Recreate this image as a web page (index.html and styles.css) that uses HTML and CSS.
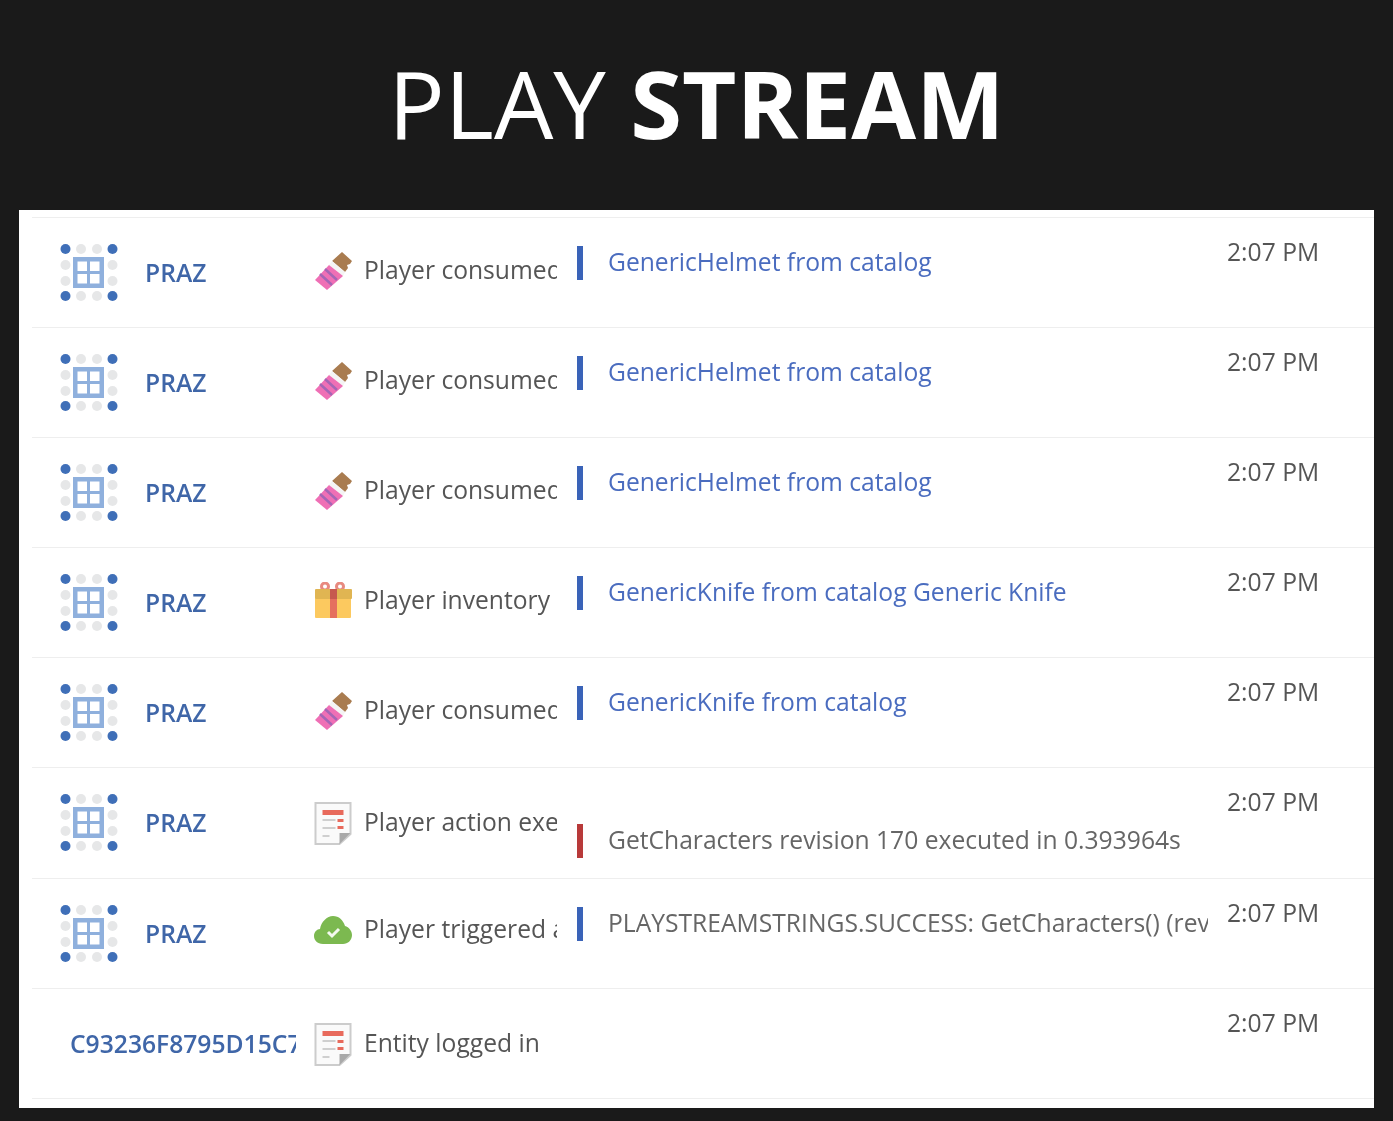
FILE: index.html
```html
<!DOCTYPE html>
<html lang="en">
<head>
    <meta charset="UTF-8">
    <meta name="viewport" content="width=device-width, initial-scale=1.0">
    <title>Play Stream</title>
    <link rel="stylesheet" href="styles.css">
</head>
<body>
    <svg class="sprites" width="0" height="0" aria-hidden="true">
        <symbol id="avatar" viewBox="0 0 58 58">
            <g fill="#e6e7e8">
                <circle cx="21" cy="5" r="5"/><circle cx="37" cy="5" r="5"/>
                <circle cx="21" cy="52" r="5"/><circle cx="37" cy="52" r="5"/>
                <circle cx="5.500" cy="21" r="5"/><circle cx="5.500" cy="37" r="5"/>
                <circle cx="52.500" cy="21" r="5"/><circle cx="52.500" cy="37" r="5"/>
            </g>
            <g fill="#3f6fb8">
                <circle cx="5.500" cy="5" r="5"/><circle cx="52.500" cy="5" r="5"/>
                <circle cx="5.500" cy="52" r="5"/><circle cx="52.500" cy="52" r="5"/>
            </g>
            <path fill="#8fb0dd" fill-rule="evenodd" d="M13 13h31v31H13zM17.500 17.500V27H27v-9.500zM30 17.500V27h9.500v-9.500zM17.500 30v9.500H27V30zM30 30v9.500h9.500V30z"/>
        </symbol>
        <symbol id="candy" viewBox="0 0 38 38">
            <path fill="#a97c50" d="M18 9 28 0l10 9-2 3-3 1 1 3-3 4z"/>
            <path fill="#f4f4f4" d="M15 13l3-4 13 11-2 4z"/>
            <path fill="#ef6fb5" d="M1 28 15 13 29 24 13 38z"/>
            <path fill="none" stroke="#a565b5" stroke-width="2.500" d="M6 22l12 11M11 17l12 11"/>
        </symbol>
        <symbol id="gift" viewBox="0 0 38 38">
            <circle cx="11" cy="4.500" r="3.500" fill="none" stroke="#e88a80" stroke-width="3"/>
            <circle cx="26" cy="4.500" r="3.500" fill="none" stroke="#e88a80" stroke-width="3"/>
            <rect x="1" y="16" width="36" height="20" rx="1" fill="#fcc95f"/>
            <rect x="1" y="7" width="37" height="10" rx="1" fill="#e0b552"/>
            <rect x="16" y="7" width="7" height="29" fill="#e5705f"/>
            <rect x="16" y="7" width="7" height="10" fill="#c6594f"/>
        </symbol>
        <symbol id="doc" viewBox="0 0 37 43">
            <path fill="#fafafa" stroke="#cccccc" stroke-width="2" d="M1 1h35v31L25 42H1z"/>
            <path fill="#a9a9a9" d="M36 31 25 42V31z"/>
            <rect x="8" y="8" width="21" height="5" fill="#e86a5c"/>
            <path fill="#cfcfcf" d="M8 17h13v2H8zM8 25h13v2H8zM8 33h7v2H8z"/>
            <path fill="#e86a5c" d="M23 17h6v3h-6zM23 24h6v3h-6z"/>
        </symbol>
        <symbol id="cloud" viewBox="0 0 38 28">
            <path fill="#7cb950" d="M9 28C3 28 0 24 0 20c0-4 3-7 6-7 1-7 7-13 13-13 6 0 10 4 12 10 4 1 7 5 7 9 0 5-4 9-9 9z"/>
            <path fill="none" stroke="#f4f9ef" stroke-width="3" d="m14 16 4 4 7-7"/>
        </symbol>
    </svg>

    <h1 class="title">PLAY <strong>STREAM</strong></h1>

    <div class="panel">
        <div class="row">
            <svg class="avatar"><use href="#avatar"/></svg>
            <div class="name">PRAZ</div>
            <svg class="icon icon-candy"><use href="#candy"/></svg>
            <div class="event">Player consumed item</div>
            <div class="detail"><a class="link">GenericHelmet from catalog</a></div>
            <div class="time">2:07 PM</div>
        </div>
        <div class="row">
            <svg class="avatar"><use href="#avatar"/></svg>
            <div class="name">PRAZ</div>
            <svg class="icon icon-candy"><use href="#candy"/></svg>
            <div class="event">Player consumed item</div>
            <div class="detail"><a class="link">GenericHelmet from catalog</a></div>
            <div class="time">2:07 PM</div>
        </div>
        <div class="row">
            <svg class="avatar"><use href="#avatar"/></svg>
            <div class="name">PRAZ</div>
            <svg class="icon icon-candy"><use href="#candy"/></svg>
            <div class="event">Player consumed item</div>
            <div class="detail"><a class="link">GenericHelmet from catalog</a></div>
            <div class="time">2:07 PM</div>
        </div>
        <div class="row">
            <svg class="avatar"><use href="#avatar"/></svg>
            <div class="name">PRAZ</div>
            <svg class="icon icon-gift"><use href="#gift"/></svg>
            <div class="event">Player inventory item added</div>
            <div class="detail"><a class="link">GenericKnife from catalog Generic Knife</a></div>
            <div class="time">2:07 PM</div>
        </div>
        <div class="row">
            <svg class="avatar"><use href="#avatar"/></svg>
            <div class="name">PRAZ</div>
            <svg class="icon icon-candy"><use href="#candy"/></svg>
            <div class="event">Player consumed item</div>
            <div class="detail"><a class="link">GenericKnife from catalog</a></div>
            <div class="time">2:07 PM</div>
        </div>
        <div class="row">
            <svg class="avatar"><use href="#avatar"/></svg>
            <div class="name">PRAZ</div>
            <svg class="icon icon-doc"><use href="#doc"/></svg>
            <div class="event event-low">Player action executed</div>
            <div class="detail detail-low">GetCharacters revision 170 executed in 0.393964s</div>
            <div class="time">2:07 PM</div>
        </div>
        <div class="row">
            <svg class="avatar"><use href="#avatar"/></svg>
            <div class="name">PRAZ</div>
            <svg class="icon icon-cloud"><use href="#cloud"/></svg>
            <div class="event event-trigger">Player triggered action</div>
            <div class="detail">PLAYSTREAMSTRINGS.SUCCESS: GetCharacters() (revision 170)</div>
            <div class="time">2:07 PM</div>
        </div>
        <div class="row">
            <div class="name name-id">C93236F8795D15C7</div>
            <svg class="icon icon-doc"><use href="#doc"/></svg>
            <div class="event event-low">Entity logged in</div>
            <div class="time">2:07 PM</div>
        </div>
    </div>
</body>
</html>
```

FILE: styles.css
```css
body {
    margin: 0;
    height: 1121px;
    overflow: hidden;
    background-color: #1a1a1a;
    font-family: "Open Sans", sans-serif;
}

.sprites {
    position: absolute;
}

.title {
    margin: 0;
    height: 210px;
    line-height: 206px;
    text-align: center;
    color: #fff;
    font-size: 94px;
    font-weight: 400;
}

.title strong {
    font-weight: 700;
}

.panel {
    margin: 0 19px;
    height: 898px;
    padding: 6.8px 0 0 13px;
    box-sizing: border-box;
    background-color: #fff;
    filter: blur(0.45px);
}

.row {
    display: grid;
    grid-template-columns: 28px 58px 27px 151px 18px 38px 12px 193px 20px 631px 1fr;
    height: 110.13px;
    box-sizing: border-box;
    border-top: 1px solid #eeeeee;
    font-size: 24.65px;
    color: #555;
}

.row:last-child {
    height: 111px;
    border-bottom: 1px solid #eeeeee;
}

.avatar {
    grid-column: 2;
    width: 58px;
    height: 58px;
    margin-top: 26px;
}

.name {
    grid-column: 4;
    margin-top: 37px;
    line-height: 36px;
    color: #3f66a8;
    font-weight: 600;
    white-space: nowrap;
    overflow: hidden;
}

.name-id {
    grid-column: 1 / 5;
    margin-left: 38px;
}

.icon {
    grid-column: 6;
    width: 38px;
}

.icon-candy,
.icon-gift {
    height: 38px;
    margin-top: 34px;
}

.icon-doc {
    height: 43px;
    margin-top: 34px;
}

.icon-cloud {
    height: 28px;
    margin-top: 37px;
}

.event {
    grid-column: 8;
    margin-top: 34px;
    line-height: 36px;
    white-space: nowrap;
    overflow: hidden;
}

.event-low {
    margin-top: 36px;
}

.event-trigger {
    margin-top: 32px;
}

.detail {
    grid-column: 10;
    height: 34px;
    margin-top: 28px;
    padding-left: 25px;
    border-left: 6px solid #3a63b8;
    color: #666;
    line-height: 32px;
    white-space: nowrap;
    overflow: hidden;
}

.detail-low {
    margin-top: 56px;
    border-left-color: #b83a3a;
}

.link {
    color: #4a6cbf;
}

.time {
    grid-column: 11;
    margin-top: 16px;
    margin-left: 19px;
    line-height: 36px;
    white-space: nowrap;
}
```
